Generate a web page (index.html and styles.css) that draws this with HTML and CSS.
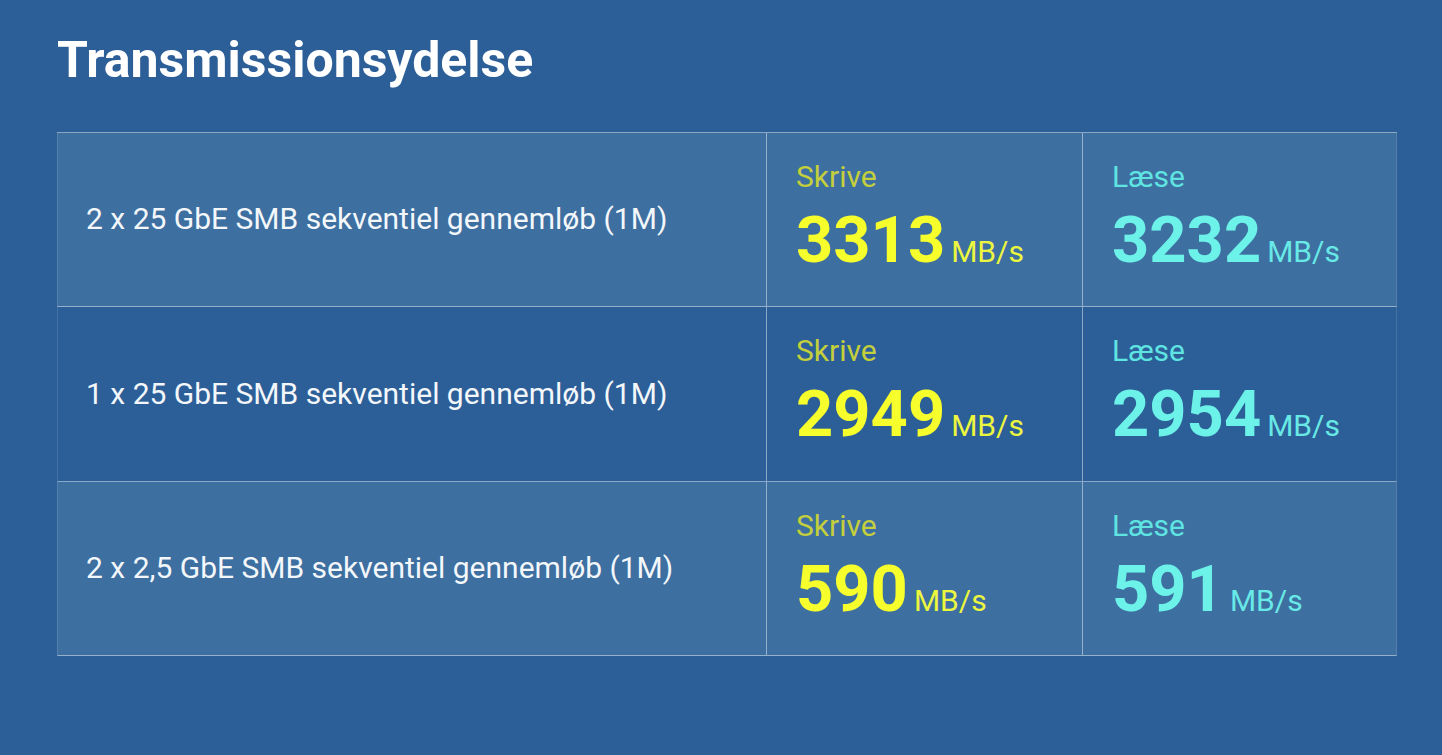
FILE: index.html
```html
<!DOCTYPE html>
<html lang="da">
<head>
<meta charset="utf-8">
<title>Transmissionsydelse</title>
<link rel="stylesheet" href="styles.css">
</head>
<body>
<main class="page">
  <h1 class="title">Transmissionsydelse</h1>
  <div class="perf">
    <div class="row row-light">
      <div class="cell cell-label">2 x 25 GbE SMB sekventiel gennemløb (1M)</div>
      <div class="cell cell-metric write">
        <div class="metric-name">Skrive</div>
        <div class="metric-value"><span class="num">3313</span><span class="unit">MB/s</span></div>
      </div>
      <div class="cell cell-metric read">
        <div class="metric-name">Læse</div>
        <div class="metric-value"><span class="num">3232</span><span class="unit">MB/s</span></div>
      </div>
    </div>
    <div class="row row-mid">
      <div class="cell cell-label">1 x 25 GbE SMB sekventiel gennemløb (1M)</div>
      <div class="cell cell-metric write">
        <div class="metric-name">Skrive</div>
        <div class="metric-value"><span class="num">2949</span><span class="unit">MB/s</span></div>
      </div>
      <div class="cell cell-metric read">
        <div class="metric-name">Læse</div>
        <div class="metric-value"><span class="num">2954</span><span class="unit">MB/s</span></div>
      </div>
    </div>
    <div class="row row-light">
      <div class="cell cell-label">2 x 2,5 GbE SMB sekventiel gennemløb (1M)</div>
      <div class="cell cell-metric write">
        <div class="metric-name">Skrive</div>
        <div class="metric-value"><span class="num">590</span><span class="unit">MB/s</span></div>
      </div>
      <div class="cell cell-metric read">
        <div class="metric-name">Læse</div>
        <div class="metric-value"><span class="num">591</span><span class="unit">MB/s</span></div>
      </div>
    </div>
  </div>
</main>
</body>
</html>
```

FILE: styles.css
```css
html, body {
  margin: 0;
  padding: 0;
}

body {
  background: #2c5f98;
  font-family: Roboto, "Liberation Sans", Arial, sans-serif;
  color: #ffffff;
  min-height: 755px;
}

.page {
  padding: 32px 45px 0 57px;
}

.title {
  margin: 0;
  font-size: 50px;
  line-height: 56px;
  font-weight: 700;
  color: #ffffff;
}

.perf {
  margin-top: 44px;
  border-top: 1px solid rgba(255, 255, 255, 0.45);
}

.row {
  display: grid;
  grid-template-columns: 708px 316px 314px;
  height: 174px;
  box-sizing: border-box;
  border-bottom: 1px solid rgba(255, 255, 255, 0.45);
  border-left: 1px solid rgba(255, 255, 255, 0.12);
  border-right: 1px solid rgba(255, 255, 255, 0.12);
}

.row-mid {
  height: 175px;
}

.row-light {
  background: #3d6fa1;
}

.cell {
  box-sizing: border-box;
}

.cell + .cell {
  border-left: 1px solid rgba(255, 255, 255, 0.45);
}

.cell-label {
  display: flex;
  align-items: center;
  padding-left: 28px;
  font-size: 30px;
  color: #f4f7fa;
  padding-bottom: 2px;
}

.cell-metric {
  padding: 27px 0 0 29px;
}

.metric-name {
  font-size: 30px;
  line-height: 34px;
}

.metric-value {
  display: flex;
  align-items: baseline;
  gap: 6px;
  margin-top: 14px;
}

.num {
  font-size: 65px;
  line-height: 65px;
  font-weight: 700;
}

.unit {
  font-size: 30px;
}

.write .metric-name {
  color: #c4cf3c;
}

.write .num {
  color: #f6ff2c;
}

.write .unit {
  color: #ecf63e;
}

.read .metric-name {
  color: #5fe4e2;
}

.read .num {
  color: #6cf2e8;
}

.read .unit {
  color: #68e9e6;
}
```
